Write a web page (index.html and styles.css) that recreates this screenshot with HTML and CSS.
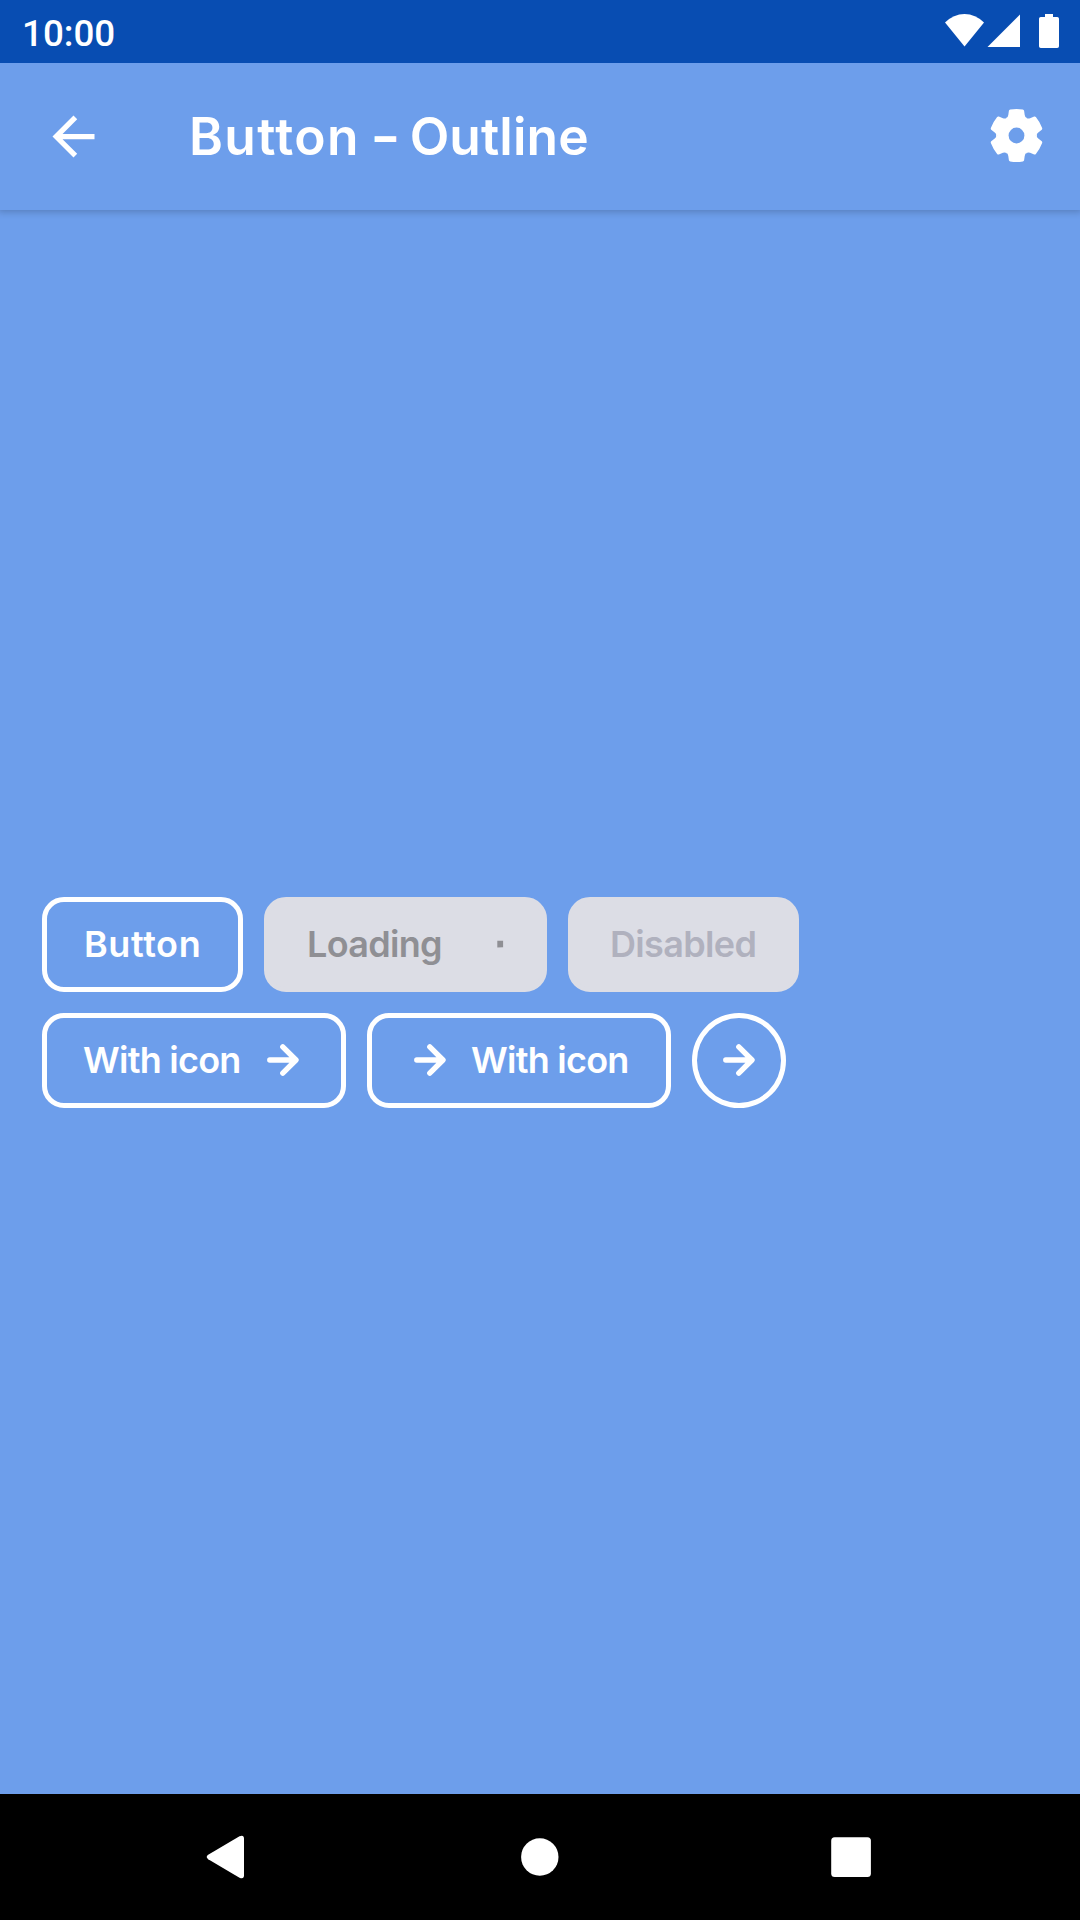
FILE: index.html
```html
<!DOCTYPE html>
<html lang="en">
<head>
<meta charset="utf-8">
<title>Button – Outline</title>
<link rel="stylesheet" href="styles.css">
</head>
<body>
<svg class="defs" aria-hidden="true">
  <symbol id="arrow" viewBox="0 0 42 42">
    <path d="M7.8 21H33M20.800 7.900L34 21 20.800 34.100" fill="none" stroke="currentColor" stroke-width="5.400" stroke-linecap="round" stroke-linejoin="round"/>
  </symbol>
</svg>
<div class="screen">
  <div class="status">
    <span class="time">10:00</span>
    <svg class="status-icons" width="116" height="36" viewBox="0 0 116 36" fill="#fff">
      <path d="M0 9.600Q8.500 1 19.500 1T39 9.600L19.500 33.500Z"/>
      <path d="M75 1.500V34H42.500Z"/>
      <path d="M100 1h8v3h4.200q1.800 0 1.800 1.800v27.400q0 1.800-1.800 1.800h-16.400q-1.800 0-1.800-1.800V5.800q0-1.800 1.800-1.800h4.200Z"/>
    </svg>
  </div>
  <header class="appbar">
    <svg class="back" width="63" height="63" viewBox="0 0 24 24" fill="#fff"><path d="M20 11H7.830l5.590-5.590L12 4l-8 8 8 8 1.410-1.410L7.830 13H20z"/></svg>
    <h1 class="title">Button <span class="dash">–</span> <span class="variant">Outline</span></h1>
    <svg class="gear" width="63" height="63" viewBox="-31.500 -31.500 63 63">
      <defs><path id="tooth" d="M0 0L-10.400-17.600Q-8.500-17.800-8.200-20.400L-7.600-24.800Q-7.400-25.800-6.300-26Q0-27 6.300-26Q7.400-25.800 7.600-24.800L8.200-20.400Q8.500-17.800 10.400-17.600Z"/></defs>
      <g fill="#fff">
        <circle r="18.500"/>
        <use href="#tooth"/><use href="#tooth" transform="rotate(60)"/><use href="#tooth" transform="rotate(120)"/>
        <use href="#tooth" transform="rotate(180)"/><use href="#tooth" transform="rotate(240)"/><use href="#tooth" transform="rotate(300)"/>
      </g>
      <circle class="gear-hole" r="7.900"/>
    </svg>
  </header>
  <main class="content">
    <div class="row">
      <button class="btn w-button"><span class="label t-button">Button</span></button>
      <button class="btn muted w-loading"><span class="label t-loading">Loading</span><svg width="42" height="42" viewBox="0 0 42 42"><path d="M34.300 17.800h5.800v6.400l-5.800.200z" fill="currentColor"/></svg></button>
      <button class="btn muted disabled w-disabled"><span class="label t-disabled">Disabled</span></button>
    </div>
    <div class="row">
      <button class="btn w-icon"><span class="label t-icon">With icon</span><svg width="42" height="42"><use href="#arrow"/></svg></button>
      <button class="btn w-icon"><svg width="42" height="42"><use href="#arrow"/></svg><span class="label t-icon">With icon</span></button>
      <button class="btn round" aria-label="Next"><svg width="42" height="42"><use href="#arrow"/></svg></button>
    </div>
  </main>
  <nav class="navbar">
    <svg width="1080" height="126" viewBox="0 0 1080 126" fill="#fff">
      <path d="M208.200 60.800L239.500 42.300Q244 40.500 244 44.800V81.200Q244 85.500 239.500 83.700L208.200 65.200Q205.200 63 208.200 60.800Z"/>
      <circle cx="539.800" cy="63" r="18.700"/>
      <rect x="831.200" y="43.200" width="39.700" height="39.700" rx="3.500"/>
    </svg>
  </nav>
</div>
</body>
</html>
```
FILE: styles.css
```css
body { margin: 0; }
.defs { position: absolute; width: 0; height: 0; }
.screen {
  width: 1080px;
  height: 1920px;
  display: flex;
  flex-direction: column;
  background: #6d9eeb;
  color: #fff;
  font-family: Inter, "Liberation Sans", sans-serif;
  overflow: hidden;
}
.screen svg { display: block; flex: none; }
.status {
  height: 63px;
  flex: none;
  box-sizing: border-box;
  padding: 0 19px 0 22px;
  display: flex;
  justify-content: space-between;
  background: #084db2;
}
.time { font: 500 36.750px/67px Roboto, sans-serif; }
.status-icons { margin-top: 13px; }
.appbar {
  height: 147px;
  flex: none;
  box-sizing: border-box;
  padding: 0 32px 0 42px;
  display: flex;
  align-items: center;
  box-shadow: 0 0 7px 2px rgba(0, 0, 0, .2);
  clip-path: inset(0 0 -20px 0);
}
.title {
  flex: 1;
  margin: -1px 0 0 84px;
  font-size: 51.500px;
  line-height: 62px;
  font-weight: 600;
  letter-spacing: 1.400px;
  white-space: nowrap;
}
.dash { font-size: 43px; font-weight: 800; vertical-align: 3px; line-height: 1; }
.variant { margin-left: -2px; letter-spacing: .100px; }
.gear { margin-top: -2px; }
.gear-hole { fill: #6d9eeb; }
.content {
  flex: 1;
  display: flex;
  flex-direction: column;
  justify-content: center;
  gap: 21px;
  padding-left: 42px;
}
.row { display: flex; gap: 21px; }
.btn {
  height: 95px;
  box-sizing: border-box;
  padding: 0 37px;
  border: 5px solid #fff;
  border-radius: 22px;
  display: flex;
  align-items: center;
  gap: 21px;
  background: none;
  color: inherit;
  font: 600 36px/44px Inter, "Liberation Sans", sans-serif;
}
.label { flex: 1; min-width: 0; text-align: left; white-space: nowrap; }
.muted { background: #dcdde5; border-color: #dcdde5; color: #8f8f94; }
.disabled { color: #b0b1be; }
.w-button { width: 201px; }
.w-loading { width: 283px; }
.w-disabled { width: 231px; }
.w-icon { width: 304px; }
.round { width: 94px; padding: 0 21px; border-radius: 50%; }
.t-button { letter-spacing: .600px; }
.t-loading { padding-left: 1px; letter-spacing: -.700px; }
.t-disabled { letter-spacing: -.650px; }
.t-icon { margin-left: -1px; letter-spacing: -.750px; }
.navbar { height: 126px; flex: none; background: #000; }
```
